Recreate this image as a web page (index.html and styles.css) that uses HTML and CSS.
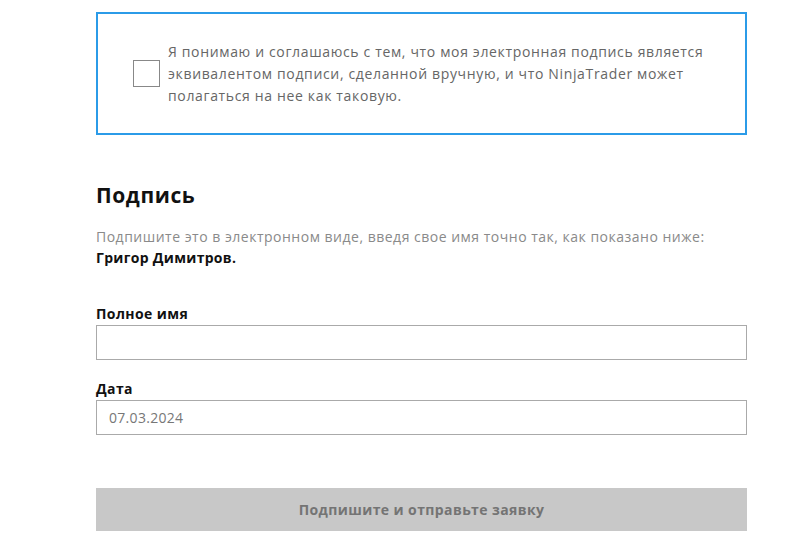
FILE: index.html
```html
<!DOCTYPE html>
<html>
<head>
    <title>Подпись заявки</title>
    <meta name="viewport" content="width=device-width, initial-scale=1">
    <link rel="stylesheet" href="styles.css">
</head>
<body>
    <div class="form-container">
        <div class="agree-box">
            <span class="checkbox"></span>
            <p class="agree-text">Я понимаю и соглашаюсь с тем, что моя электронная подпись является эквивалентом подписи, сделанной вручную, и что NinjaTrader может полагаться на нее как таковую.</p>
        </div>

        <h2>Подпись</h2>
        <p class="hint">Подпишите это в электронном виде, введя свое имя точно так, как показано ниже:</p>
        <p class="name">Григор Димитров.</p>

        <div class="form-group">
            <label for="full-name">Полное имя</label>
            <input id="full-name" type="text">
        </div>
        <div class="form-group">
            <label for="date">Дата</label>
            <input id="date" type="text" value="07.03.2024">
        </div>

        <button class="submit-btn" disabled>Подпишите и отправьте заявку</button>
    </div>
</body>
</html>
```

FILE: styles.css
```css
body {
    font-family: "Open Sans", Arial, sans-serif;
    margin: 0;
    background: #fff;
}
.form-container {
    width: 651px;
    margin-left: 96px;
    padding-top: 12px;
}
.agree-box {
    display: flex;
    align-items: center;
    border: 2px solid #2b9be8;
    height: 119px;
    padding: 0 30px 0 35px;
}
.checkbox {
    flex: none;
    width: 25px;
    height: 25px;
    border: 1px solid #888;
    margin-right: 8px;
}
.agree-text {
    margin: 0;
    font-size: 14px;
    line-height: 22px;
    color: #666;
    letter-spacing: 0.65px;
}
h2 {
    margin: 46px 0 0;
    font-size: 21px;
    line-height: 28px;
    font-weight: 700;
    color: #111;
    letter-spacing: 0.6px;
}
.hint {
    margin: 17px 0 0;
    font-size: 14px;
    line-height: 21px;
    color: #8a8a8a;
    letter-spacing: 0.5px;
}
.name {
    margin: 0;
    font-size: 14px;
    line-height: 21px;
    font-weight: 700;
    color: #111;
    letter-spacing: 0.3px;
}
.form-group {
    margin-top: 19px;
}
.name + .form-group {
    margin-top: 36px;
}
label {
    display: block;
    font-size: 14px;
    line-height: 20px;
    font-weight: 700;
    color: #111;
    margin-bottom: 1px;
    letter-spacing: 0.4px;
}
input {
    display: block;
    width: 100%;
    height: 35px;
    box-sizing: border-box;
    border: 1px solid #aaa;
    padding: 0 12px;
    font-family: inherit;
    font-size: 14px;
    color: #777;
    letter-spacing: 0.3px;
    outline: none;
}
.submit-btn {
    display: block;
    width: 100%;
    height: 43px;
    margin-top: 53px;
    border: none;
    background-color: #c8c8c8;
    color: #747474;
    font-family: "Open Sans", Arial, sans-serif;
    font-size: 14px;
    font-weight: 700;
    letter-spacing: 0.4px;
}
```
